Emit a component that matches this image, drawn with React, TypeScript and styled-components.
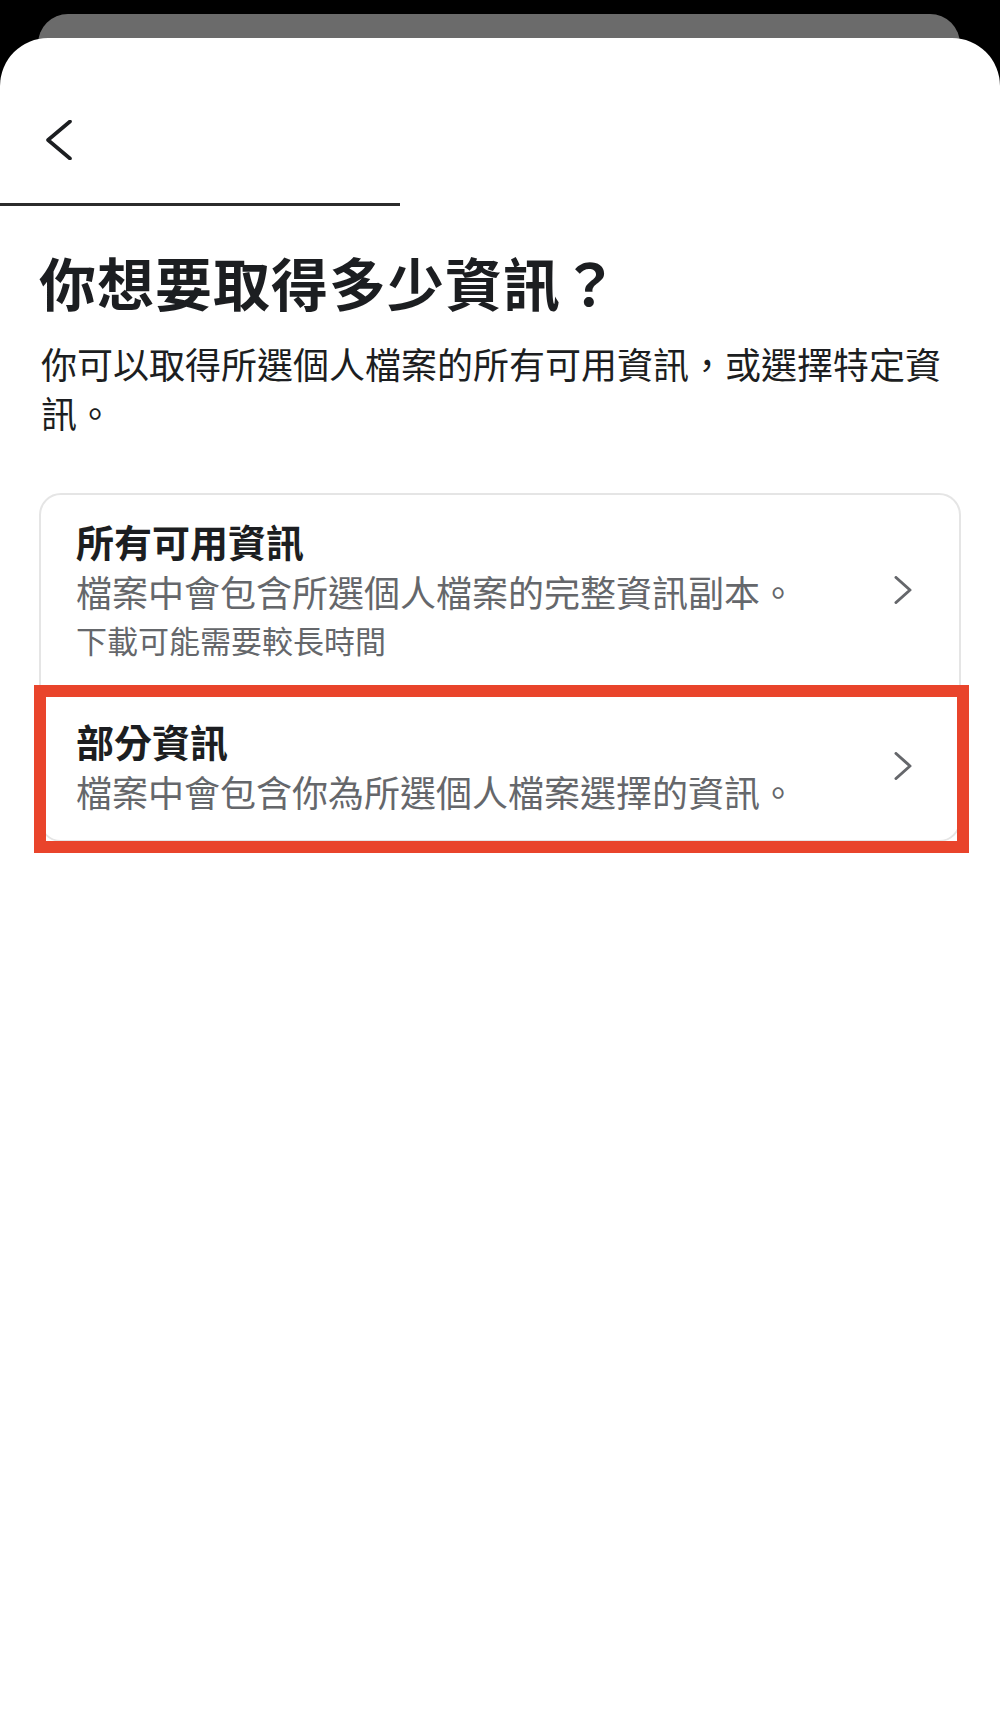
import React from "react";
import styled, { createGlobalStyle } from "styled-components";

const GlobalStyle = createGlobalStyle`
    html, body {
      margin: 0;
      padding: 0;
      background: #000;
    }
    body {
      font-family: "Noto Sans CJK TC", "Noto Sans", sans-serif;
      color: #1c1e21;
    }
`;

const Screen = styled.div`
    width: 1000px;
    min-height: 1733px;
    background: #000;
    display: flex;
    flex-direction: column;
    padding-top: 14px;
    box-sizing: border-box;
`;

const BackSheet = styled.div`
    height: 60px;
    margin: 0 40px -36px 38px;
    background: #6b6b6b;
    border-radius: 30px 30px 0 0;
`;

const Sheet = styled.div`
    flex: 1;
    background: #fff;
    border-radius: 48px 48px 0 0;
    display: flex;
    flex-direction: column;
`;

const Header = styled.div`
    height: 165px;
    box-sizing: border-box;
    display: flex;
    align-items: flex-end;
    padding: 0 0 44px 45px;
`;

const BackButton = styled.button`
    border: none;
    background: none;
    padding: 0;
    width: 30px;
    height: 38px;
    display: flex;
    align-items: center;
    cursor: pointer;
`;

const Progress = styled.div`
    width: 400px;
    height: 3px;
    background: #2b2b2b;
`;

const Body = styled.div`
    padding: 39px 39px 0;
    display: flex;
    flex-direction: column;
`;

const Title = styled.h1`
    margin: 0;
    font-size: 57px;
    line-height: 73px;
    font-weight: 700;
    letter-spacing: 1px;
    color: #1c1e21;
`;

const Subtitle = styled.p`
    margin: 21px 0 0 2px;
    font-size: 36px;
    line-height: 49px;
    font-weight: 400;
    color: #1c1e21;
`;

const Card = styled.div`
    margin-top: 56px;
    border: 2px solid #e5e5e5;
    border-radius: 22px;
    display: flex;
    flex-direction: column;
`;

const Option = styled.div<{ $highlighted?: boolean; $top?: number }>`
    position: relative;
    display: flex;
    align-items: center;
    justify-content: space-between;
    padding: ${({ $top = 25 }) => `${$top}px 47px ${49 - $top}px 35px`};
    cursor: pointer;

    ${({ $highlighted }) =>
      $highlighted &&
      `
      &::after {
        content: "";
        position: absolute;
        top: -6px;
        left: -7px;
        right: -10px;
        bottom: -13px;
        border: 12px solid #e9442b;
        pointer-events: none;
      }
    `}
`;

const OptionText = styled.div`
    display: flex;
    flex-direction: column;
`;

const OptionTitle = styled.div`
    font-size: 38px;
    line-height: 50px;
    font-weight: 700;
    color: #1c1e21;
`;

const OptionDesc = styled.div<{ $small?: boolean }>`
    font-size: ${({ $small }) => ($small ? "31px" : "36px")};
    line-height: ${({ $small }) => ($small ? "47px" : "50px")};
    color: #65676b;
`;

function ChevronLeft() {
    return (
        <svg width="28" height="40" viewBox="0 0 28 40" fill="none">
            <polyline
                points="25,1.5 3,20 25,38.5"
                stroke="#1c1e21"
                strokeWidth="3.6"
                strokeLinecap="round"
                strokeLinejoin="round"
            />
        </svg>
    );
}

function ChevronRight() {
    return (
        <svg width="18" height="28" viewBox="0 0 18 28" fill="none">
            <polyline
                points="2,1.5 16,14 2,26.5"
                stroke="#65676b"
                strokeWidth="3"
                strokeLinecap="round"
                strokeLinejoin="round"
            />
        </svg>
    );
}

interface IOption {
    title: string;
    lines: { text: string; small?: boolean }[];
    top: number;
    highlighted?: boolean;
}

const options: IOption[] = [
    {
        title: "所有可用資訊",
        lines: [
            { text: "檔案中會包含所選個人檔案的完整資訊副本。" },
            { text: "下載可能需要較長時間", small: true },
        ],
        top: 21,
    },
    {
        title: "部分資訊",
        lines: [{ text: "檔案中會包含你為所選個人檔案選擇的資訊。" }],
        top: 25,
        highlighted: true,
    },
];

export default function App() {
    return (
        <>
            <GlobalStyle />
            <Screen>
                <BackSheet />
                <Sheet>
                    <Header>
                        <BackButton aria-label="返回">
                            <ChevronLeft />
                        </BackButton>
                    </Header>
                    <Progress />
                    <Body>
                        <Title>你想要取得多少資訊？</Title>
                        <Subtitle>
                            你可以取得所選個人檔案的所有可用資訊，或選擇特定資訊。
                        </Subtitle>
                        <Card>
                            {options.map((o) => (
                                <Option
                                    key={o.title}
                                    $top={o.top}
                                    $highlighted={o.highlighted}
                                >
                                    <OptionText>
                                        <OptionTitle>{o.title}</OptionTitle>
                                        {o.lines.map((l) => (
                                            <OptionDesc key={l.text} $small={l.small}>
                                                {l.text}
                                            </OptionDesc>
                                        ))}
                                    </OptionText>
                                    <ChevronRight />
                                </Option>
                            ))}
                        </Card>
                    </Body>
                </Sheet>
            </Screen>
        </>
    );
}
